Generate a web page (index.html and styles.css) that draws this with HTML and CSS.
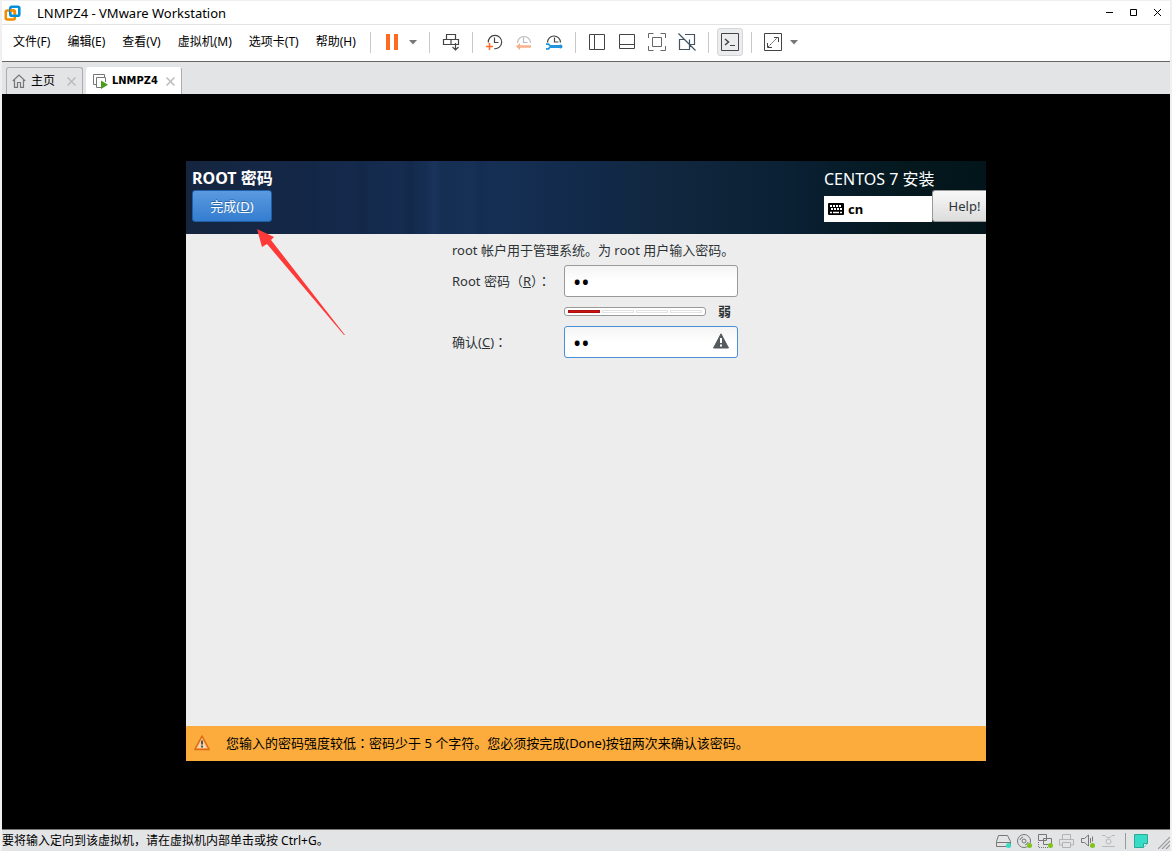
FILE: index.html
```html
<!DOCTYPE html>
<html lang="zh-CN">
<head>
<meta charset="utf-8">
<title>LNMPZ4 - VMware Workstation</title>
<link rel="stylesheet" href="styles.css">
</head>
<body>
<div class="window">
  <header class="titlebar">
    <svg class="app-logo" width="18" height="18" viewBox="0 0 18 18" fill="none" stroke-width="2.6">
      <rect x="1.800" y="6.500" width="9" height="9" rx="1.500" stroke="#f38b00"/>
      <rect x="6.300" y="2.800" width="9" height="9" rx="1.500" stroke="#0091da"/>
      <path d="M6 6.500h3.400a1.400 1.400 0 0 1 1.400 1.400v2.400" stroke="#f38b00"/>
    </svg>
    <h1 class="title">LNMPZ4 - VMware Workstation</h1>
    <div class="window-controls">
      <button class="win-button" aria-label="最小化"><svg width="9" height="9" viewBox="0 0 9 9"><path d="M1 4.500h7" stroke="#000"/></svg></button>
      <button class="win-button" aria-label="最大化"><svg width="9" height="9" viewBox="0 0 9 9"><path d="M1.500 1.500h6v6h-6z" fill="none" stroke="#000"/></svg></button>
      <button class="win-button" aria-label="关闭"><svg width="9" height="9" viewBox="0 0 9 9"><path d="M1 1l7 7M8 1l-7 7" stroke="#000"/></svg></button>
    </div>
  </header>

  <div class="commandbar">
    <nav class="menu">
      <button class="menu-item">文件(F)</button>
      <button class="menu-item">编辑(E)</button>
      <button class="menu-item">查看(V)</button>
      <button class="menu-item">虚拟机(M)</button>
      <button class="menu-item">选项卡(T)</button>
      <button class="menu-item">帮助(H)</button>
    </nav>
    <div class="toolbar">
      <span class="separator"></span>
      <button class="tool" aria-label="挂起"><svg width="20" height="20" viewBox="0 0 20 20" fill="#fd6a21"><path d="M4 2h4v16H4zM12 2h4v16h-4z"/></svg></button>
      <button class="caret" aria-label="电源选项"><svg width="8" height="5" viewBox="0 0 8 5"><path d="M0 0h8L4 4.500z" fill="#777"/></svg></button>
      <span class="separator"></span>
      <button class="tool" aria-label="发送按键"><svg width="20" height="20" viewBox="0 0 20 20" fill="none" stroke="#444" stroke-width="1.200"><path d="M5.500 2.500h9v5h-9zM2.500 7.500h7.500v5H2.500zM10 7.500h7.500v5H10zM14.500 11v6.500M11.500 15l3 3 3-3"/></svg></button>
      <span class="separator"></span>
      <button class="tool" aria-label="拍摄快照"><svg width="20" height="20" viewBox="0 0 20 20" fill="none" stroke="#444" stroke-width="1.200"><path d="M4.300 10.500a6.700 6.700 0 1 1 6 6.200M10.500 5.500v5h4"/><path d="M2 14.500h7M5.500 11v7" stroke="#fd6a21" stroke-width="1.500"/></svg></button>
      <button class="tool" aria-label="恢复快照"><svg width="20" height="20" viewBox="0 0 20 20" fill="none" stroke="#bbb" stroke-width="1.200"><path d="M3.500 11a6.500 6.500 0 1 1 13 0M9.500 5.500v5h4"/><path d="M17 14.500H5" stroke="#f9b08d" stroke-width="2.500"/><path d="M2 14.500l4-3.500v7z" fill="#f9b08d" stroke="none"/></svg></button>
      <button class="tool" aria-label="管理快照"><svg width="20" height="20" viewBox="0 0 20 20" fill="none" stroke="#444" stroke-width="1.200"><path d="M3.500 10.500a6.500 6.500 0 1 1 13 0M10.500 5.500v4.500h4"/><path d="M6 14.500h10.500" stroke="#2196dc" stroke-width="3"/><path d="M2 12.200h2.500l2 2.300-2 2.300H2" stroke="#2196dc" stroke-width="1.800"/><circle cx="16.500" cy="14.500" r="2" fill="#2196dc" stroke="none"/></svg></button>
      <span class="separator"></span>
      <button class="tool" aria-label="显示库"><svg width="20" height="20" viewBox="0 0 20 20" fill="none" stroke="#444"><path d="M2.500 2.500h15v15h-15zM7.500 2.500v15"/></svg></button>
      <button class="tool" aria-label="缩略图栏"><svg width="20" height="20" viewBox="0 0 20 20" fill="none" stroke="#444"><path d="M2.500 2.500h15v14h-15zM2.500 12.500h15"/></svg></button>
      <button class="tool" aria-label="全屏"><svg width="20" height="20" viewBox="0 0 20 20" fill="none" stroke="#666"><path d="M5.500 5.500h9v9h-9zM1.500 6V1.500h5M13.500 1.500h5V6M18.500 14v4.500h-5M6.500 18.500h-5V14"/></svg></button>
      <button class="tool" aria-label="Unity"><svg width="20" height="20" viewBox="0 0 20 20" fill="none" stroke="#425463" stroke-width="1.200"><path d="M8 2.500h9.500v10h-5v-5M8 7.500H2.500v10h10v-5M1.500 1.500l17 17"/></svg></button>
      <span class="separator"></span>
      <button class="tool tool-active" aria-label="控制台视图"><svg width="20" height="20" viewBox="0 0 20 20" fill="none" stroke="#444"><path d="M1.500 1.500h17v17h-17zM10 13.500h5"/><path d="M5 7l3.500 3L5 13" stroke-width="1.500"/></svg></button>
      <span class="separator"></span>
      <button class="tool" aria-label="自由拉伸"><svg width="20" height="20" viewBox="0 0 20 20" fill="none" stroke="#444"><path d="M1.500 1.500h17v17h-17zM11 5.500h4.500V10M9 15.500H4.500V11"/><path d="M5 15L15 5" stroke-dasharray="2 1"/></svg></button>
      <button class="caret" aria-label="拉伸选项"><svg width="8" height="5" viewBox="0 0 8 5"><path d="M0 0h8L4 4.500z" fill="#777"/></svg></button>
    </div>
  </div>

  <div class="tabs">
    <div class="tab tab-home">
      <svg width="14" height="14" viewBox="0 0 14 14" fill="none" stroke="#777" stroke-width="1.200"><path d="M.8 7L7 1l6.200 6M2.500 6v7.300h3V8.500h3v4.800h3V6"/></svg>
      <button class="tab-label">主页</button>
      <button class="tab-close" aria-label="关闭主页"><svg width="9" height="9" viewBox="0 0 9 9"><path d="M.5.500l8 8M8.500.500l-8 8" stroke="#bbb" stroke-width="1.500"/></svg></button>
    </div>
    <div class="tab tab-current">
      <svg width="15" height="15" viewBox="0 0 15 15" fill="none" stroke="#777"><path d="M3 10.500H.500V.500h11V3M8 13.500H3.500v-10h9V8"/><path d="M8 6.500l7 4.200L8 15z" fill="#4b9b1c" stroke="none"/></svg>
      <button class="tab-label">LNMPZ4</button>
      <button class="tab-close" aria-label="关闭 LNMPZ4"><svg width="9" height="9" viewBox="0 0 9 9"><path d="M.5.500l8 8M8.500.500l-8 8" stroke="#bbb" stroke-width="1.500"/></svg></button>
    </div>
  </div>

  <main class="console">
    <section class="guest">
      <header class="guest-header">
        <div class="guest-left">
          <h2 class="guest-title">ROOT 密码</h2>
          <button class="done">完成(<u>D</u>)</button>
        </div>
        <div class="guest-right">
          <p class="product">CENTOS 7 安装</p>
          <div class="guest-tools">
            <button class="keyboard">
              <svg width="16" height="12" viewBox="0 0 16 12"><rect width="16" height="12" rx="1" fill="#000"/><path d="M2 3h12M3 6h11" stroke="#fff" stroke-width="2" stroke-dasharray="2 1"/><path d="M2 9.500h2M5 9.500h6M12 9.500h2" stroke="#fff" stroke-width="1.500"/></svg>
              cn
            </button>
            <button class="help">Help!</button>
          </div>
        </div>
      </header>
      <form class="guest-body">
        <p class="intro">root 帐户用于管理系统。为 root 用户输入密码。</p>
        <label for="pw">Root 密码（<u>R</u>）<span class="colon" lang="zh-TW">：</span></label>
        <input class="entry" id="pw" type="password" value="ab">
        <div class="strength">
          <div class="meter"><span class="seg seg-on"></span><span class="seg"></span><span class="seg"></span><span class="seg"></span></div>
          <strong>弱</strong>
        </div>
        <label for="confirm">确认(<u>C</u>)<span class="colon" lang="zh-TW">：</span></label>
        <div class="entry-wrap">
          <input class="entry entry-focus" id="confirm" type="password" value="ab">
          <svg class="entry-icon" width="16" height="16" viewBox="0 0 16 16"><path d="M8 .8L15.500 15H.5z" fill="#555a5c" stroke="#555a5c" stroke-linejoin="round"/><path d="M8 5v5M8 11.500v2" stroke="#fff" stroke-width="2"/></svg>
        </div>
      </form>
      <footer class="warning">
        <svg width="16" height="16" viewBox="0 0 16 16"><path d="M8 1L15.200 14.500H.8z" fill="#f7a85c" stroke="#e06a10" stroke-width="1.500" stroke-linejoin="round"/><path d="M8 3.500L13 13H3z" fill="#f6d5b0"/><path d="M8 5.500v4M8 10.500v2" stroke="#333" stroke-width="1.600"/></svg>
        <span>您输入的密码强度较低<span class="colon" lang="zh-TW">：</span>密码少于 5 个字符。您必须按完成(Done)按钮两次来确认该密码。</span>
      </footer>
      <svg class="arrow" width="90" height="108" viewBox="0 0 90 108"><path d="M0 0L17 8 14 11 88 106 87 106 10 15 5 18z" fill="#fd3a38"/></svg>
    </section>
  </main>

  <footer class="statusbar">
    <span class="status-text">要将输入定向到该虚拟机，请在虚拟机内部单击或按 Ctrl+G。</span>
    <div class="devices">
      <svg width="17" height="16" viewBox="0 0 17 16" fill="none" stroke="#777"><path d="M3.500 2.500h9l3 6v5h-14v-5zM1.500 9.500h14"/><circle cx="13.500" cy="12.500" r="2.500" fill="#36dcc5" stroke="none"/></svg>
      <svg width="17" height="16" viewBox="0 0 17 16" fill="none" stroke="#777"><circle cx="8" cy="8" r="6.500"/><circle cx="8" cy="8" r="2"/><path d="M4 7a4 4 0 0 1 3-3M12 9a4 4 0 0 1-3 3"/><circle cx="13.500" cy="12.500" r="2.500" fill="#80c41c" stroke="none"/></svg>
      <svg width="17" height="16" viewBox="0 0 17 16" fill="none" stroke="#777"><path d="M1.500 1.500h8v6h-8zM6.500 5.500h8v6h-8z"/><path d="M1.500 9v5.500H11" stroke-dasharray="1 1"/><circle cx="13.500" cy="12.500" r="2.500" fill="#80c41c" stroke="none"/></svg>
      <svg width="17" height="16" viewBox="0 0 17 16" fill="none" stroke="#b2b3b5"><path d="M4.500 6V1.500h8V6M4.500 12h-3V6.500h14V12h-3M4.500 9.500h8v5h-8z"/></svg>
      <svg width="17" height="16" viewBox="0 0 17 16" fill="none" stroke="#777"><path d="M2.500 5.500h3l4-3.500v11l-4-3.500h-3zM11.500 5v5M13.500 3.500v5"/><circle cx="13.500" cy="12.500" r="2.500" fill="#80c41c" stroke="none"/></svg>
      <svg width="17" height="16" viewBox="0 0 17 16" fill="none" stroke="#b8b9bb"><path d="M2 2.500h3l2 2h3l2-2h3M2 13.500h13"/><circle cx="8.500" cy="8.500" r="2.500"/></svg>
      <span class="status-separator"></span>
      <svg width="14" height="14" viewBox="0 0 14 14"><path d="M.5.500h13v9l-4 4H.5z" fill="#36dcc5" stroke="#2ea997"/><path d="M9.500 13.500v-4h4" fill="#c9f5ee" stroke="#2ea997"/></svg>
      <svg class="grip" width="12" height="12" viewBox="0 0 12 12"><path d="M0 12L12 0M4 12l8-8M8 12l4-4" stroke="#999" stroke-width="1.200"/></svg>
    </div>
  </footer>
</div>
</body>
</html>
```

FILE: styles.css
```css
* { box-sizing: border-box; }

body {
  margin: 0;
  background: #f0f0f0;
  color: #000;
  font: 12px/16px "Noto Sans", "Noto Sans CJK SC", sans-serif;
}

h1, h2, p { margin: 0; font-weight: 400; }

button {
  margin: 0;
  padding: 0;
  border: 0;
  background: none;
  color: inherit;
  font: inherit;
}

svg { display: block; flex: none; }

.window {
  display: flex;
  flex-direction: column;
  min-height: 100vh;
  border: solid #f0f0f0;
  border-width: 1px 2px 0;
}

.titlebar {
  display: flex;
  align-items: center;
  height: 24px;
  padding: 0 1px 0 2px;
  background: #fff;
  border-bottom: 1px solid #e3e3e3;
}

.title {
  flex: 1;
  padding-left: 15px;
  font-size: 13px;
}

.window-controls { display: flex; }

.win-button {
  display: grid;
  place-items: center;
  width: 24px;
  height: 22px;
}

.commandbar {
  display: flex;
  align-items: center;
  height: 37px;
  padding-bottom: 2px;
  background: #fff;
  border-bottom: 1px solid #666;
}

.menu { display: flex; gap: 1px; padding-left: 3px; }
.menu-item { padding: 0 8px; white-space: nowrap; }

.toolbar { display: flex; align-items: center; }

.separator {
  width: 1px;
  height: 21px;
  margin: 0 6px;
  background: #c9c9c9;
}

.tool {
  display: grid;
  place-items: center;
  width: 30px;
  height: 28px;
}

.tool-active {
  width: 26px;
  margin: 0 2px;
  background: #ebecee;
  border: 1px solid #d5d6d8;
  border-radius: 3px;
}

.caret {
  display: grid;
  place-items: center start;
  width: 16px;
  height: 28px;
  padding-left: 2px;
}

.tabs {
  display: flex;
  align-items: flex-end;
  gap: 3px;
  height: 32px;
  padding-left: 4px;
  background: #e3e4e6;
}

.tab {
  display: flex;
  align-items: center;
  height: 27px;
  padding: 0 6px 0 5px;
  border: 1px solid #adadad;
  border-bottom: 0;
  border-radius: 3px 3px 0 0;
}

.tab-home .tab-label { padding: 0 12px 0 5px; }
.tab-current { padding-left: 6px; background: #fff; border-left-color: #fff; border-top-color: #fff; }
.tab-current .tab-label { padding: 0 8px 0 4px; font: bold 11px/16px "DejaVu Sans Condensed", "DejaVu Sans", sans-serif; }

.console {
  display: flex;
  flex: 1;
  align-items: center;
  justify-content: center;
  padding-bottom: 2px;
  background: #000;
}

.guest {
  position: relative;
  display: flex;
  flex-direction: column;
  width: 100%;
  max-width: 800px;
  min-height: 600px;
  background: #ededed;
  color: #2e3436;
  font-size: 13px;
  line-height: 20px;
}

.guest-header {
  display: flex;
  justify-content: space-between;
  height: 73px;
  padding: 7px 0 0 6px;
  background:
    linear-gradient(90deg, transparent 12%, rgba(8, 24, 50, 0.12) 16%, transparent 17% 21%, rgba(8, 24, 50, 0.15) 22%, transparent 23% 27%, rgba(8, 24, 50, 0.18) 28%, transparent 29% 30%, rgba(60, 110, 180, 0.1) 31%, transparent 32% 36%, rgba(8, 24, 50, 0.15) 37%, transparent 38%),
    linear-gradient(90deg, #15253f 0, #14294b 20%, #163056 36%, #122b4c 48%, #11273f 60%, #0a2033 76%, #04181e 90%, #02151a 100%);
  color: #fff;
}

.guest-title { margin-bottom: 2px; font-size: 16px; font-weight: 700; line-height: 20px; }

.done {
  width: 80px;
  height: 32px;
  border: 1px solid #1f5fa8;
  border-radius: 3px;
  background: linear-gradient(#5a9ae0, #347dd0);
  text-shadow: 0 -1px #2a66a8;
}

.guest-right { width: 162px; }
.product { font-size: 16px; line-height: 22px; }
.guest-tools { display: flex; align-items: flex-end; }

.keyboard {
  display: flex;
  align-items: center;
  gap: 4px;
  width: 108px;
  height: 26px;
  padding-left: 4px;
  background: #fff;
  color: #000;
  font-weight: 700;
}

.help {
  flex: 1;
  height: 32px;
  padding-left: 10px;
  border: 1px solid #999;
  border-right: 0;
  border-radius: 3px 0 0 3px;
  background: linear-gradient(#f8f8f8, #dcdcdc);
  color: #2e3436;
}

.guest-body {
  display: grid;
  flex: 1;
  grid-template-columns: 112px 174px;
  align-content: start;
  align-items: center;
  justify-content: center;
  padding: 6px 0 0 18px;
}

.intro { grid-column: 1 / -1; margin-bottom: 5px; white-space: nowrap; }
label { white-space: nowrap; }
.colon { font-family: "Noto Sans CJK TC", sans-serif; line-height: 16px; }

.entry {
  display: block;
  width: 100%;
  height: 32px;
  padding: 0 8px;
  border: 1px solid #999;
  border-radius: 3px;
  background: linear-gradient(#f4f4f4, #fff 50%);
  color: #000;
  font: 22px/28px "Noto Sans", sans-serif;
}

.entry-focus { border-color: #4a90d9; }
.entry-wrap { position: relative; }
.entry-icon { position: absolute; top: 7px; right: 9px; }

.strength {
  display: flex;
  grid-column: 2;
  align-items: center;
  gap: 12px;
  height: 29px;
}

.meter {
  display: flex;
  gap: 2px;
  width: 142px;
  height: 9px;
  padding: 2px 3px;
  border: 1px solid #999;
  border-radius: 3px;
  background: #fff;
}

.seg { flex: 1; border: 1px solid #e2e2e2; }
.seg-on { background: #cc1212; border-color: #a11; }

.warning {
  display: flex;
  align-items: center;
  gap: 16px;
  height: 35px;
  padding: 0 8px;
  background: #fbac3d;
  color: #000;
}

.arrow { position: absolute; top: 68px; left: 71px; }

.statusbar {
  display: flex;
  align-items: center;
  justify-content: space-between;
  height: 22px;
  padding-top: 1px;
  background: #e3e4e6;
  border-top: 1px solid #777;
}

.devices { display: flex; align-items: center; gap: 4px; }
.status-separator { width: 1px; height: 16px; margin: 0 4px; background: #999; }
.grip { margin-left: 6px; align-self: flex-end; }
```
